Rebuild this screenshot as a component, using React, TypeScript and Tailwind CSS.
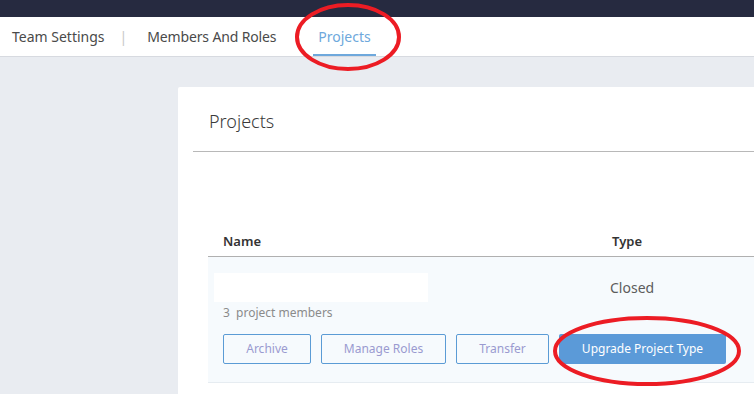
import React from "react";

export default function App() {
  return (
    <div
      className="relative w-[754px] h-[394px] overflow-hidden bg-[#e9ecf1] flex flex-col"
      style={{ fontFamily: '"Noto Sans", "Open Sans", sans-serif' }}
    >
      <div className="h-[17px] bg-[#262a40] shrink-0" />
      <nav className="h-[40px] shrink-0 bg-white border-b border-[#d7dae0] flex items-stretch pl-[12px] text-[14px] text-[#4a4a4a]">
        <span className="flex items-center">Team Settings</span>
        <span className="flex items-center ml-[15px] mr-[20px] text-[#c8c8c8]">|</span>
        <span className="flex items-center tracking-[-0.15px]">Members And Roles</span>
        <span className="flex items-center ml-[37px] px-[5px] border-b-2 border-[#6ea8dc] text-[#6ea8dc] pt-[2px]">
          Projects
        </span>
      </nav>
      <main className="flex-1 flex pl-[178px] pt-[30px]">
        <section className="flex-1 bg-white rounded-tl-[2px] pl-[15px] flex flex-col">
          <div className="h-[65px] border-b border-[#b8b8b8] pl-[16px] flex items-center">
            <h1 className="text-[18px] font-light text-[#3a3a3a] mt-[5px]">Projects</h1>
          </div>
          <div className="pl-[15px] pt-[75px] flex flex-col">
            <div className="h-[30px] border-b border-[#b0b0b0] flex items-center text-[13px] font-semibold text-[#333]">
              <span className="w-[404px] pl-[15px]">Name</span>
              <span>Type</span>
            </div>
            <div className="bg-[#f6fafd] border-b border-[#e6ecf1] h-[126px] pt-[16px]">
              <div className="flex">
                <div className="w-[402px] pl-[6px]">
                  <div className="w-[214px] h-[29px] bg-white" />
                  <div className="pl-[9px] mt-[2px] text-[12px] text-[#8b8b8b] whitespace-pre">3  project members</div>
                </div>
                <div className="h-[29px] flex items-center text-[14px] text-[#5c5c5c]">Closed</div>
              </div>
              <div className="flex gap-[10px] pl-[15px] mt-[12px] text-[12px]">
                <button className="w-[88px] h-[30px] border border-[#5b9bd5] rounded-[2px] text-[#9a9ad0] bg-transparent">Archive</button>
                <button className="w-[125px] h-[30px] border border-[#5b9bd5] rounded-[2px] text-[#9a9ad0] bg-transparent">Manage Roles</button>
                <button className="w-[93px] h-[30px] border border-[#5b9bd5] rounded-[2px] text-[#9a9ad0] bg-transparent">Transfer</button>
                <button className="w-[167px] h-[30px] rounded-[2px] bg-[#5b9ad8] text-white">Upgrade Project Type</button>
              </div>
            </div>
          </div>
        </section>
      </main>
      <svg className="absolute inset-0 pointer-events-none" width="754" height="394">
        <ellipse cx="348" cy="37" rx="51" ry="32" fill="none" stroke="#ec1c24" strokeWidth="4" />
        <ellipse cx="647" cy="351" rx="92" ry="33" fill="none" stroke="#ec1c24" strokeWidth="4" />
      </svg>
    </div>
  );
}
